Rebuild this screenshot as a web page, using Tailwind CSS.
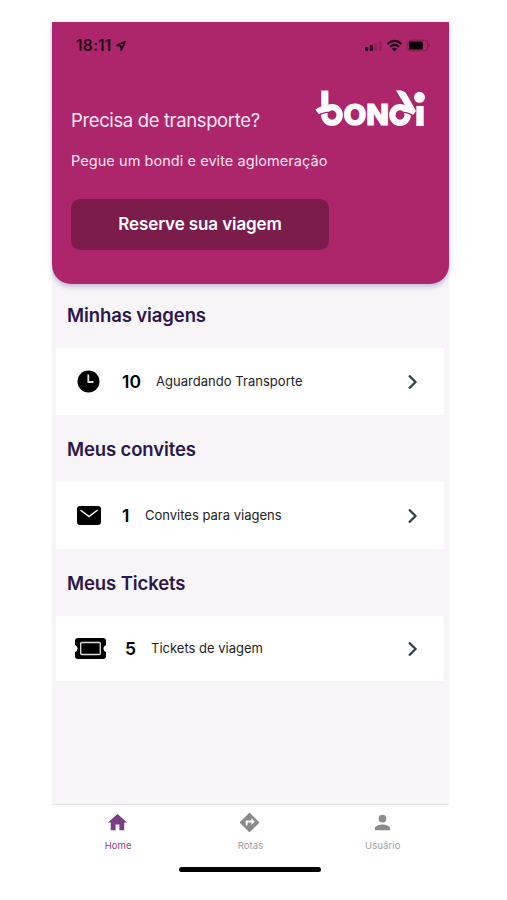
<!DOCTYPE html>
<html lang="pt-BR">
<head>
<meta charset="utf-8">
<title>Bondi</title>
<script src="https://cdn.jsdelivr.net/npm/@tailwindcss/browser@4"></script>
</head>
<body class="bg-white font-['Inter',sans-serif]">
<div class="flex h-[900px] w-[507px] flex-col pt-[22px] pl-[52px]">
  <main class="flex h-[782px] w-[397px] shrink-0 flex-col bg-[#f7f5f7]">
    <header class="h-[262px] shrink-0 rounded-b-[19px] bg-[#ad256b] px-[19px] text-white shadow-[0_3px_5px_rgba(80,60,150,0.3)]">
      <div class="flex h-[47px] items-center justify-between pl-[5px] text-[#1c0715]">
        <div class="flex items-center gap-[3px]">
          <span class="text-[15.5px] leading-none font-semibold tracking-[0.2px]">18:11</span>
          <svg class="h-[12px] w-[12px]" viewBox="0 0 12 12" fill="none" stroke="currentColor" stroke-width="1.7" stroke-linejoin="round"><path d="M10.300 1.500 2 5.300l3.800.5.4 4.400z"/></svg>
        </div>
        <svg class="h-[14px] w-[68px]" viewBox="0 0 68 14" fill="currentColor">
          <rect x="3" y="8" width="3.2" height="4" rx="1"/><rect x="7.700" y="6" width="3.200" height="6" rx="1"/>
          <g opacity=".15"><rect x="12.500" y="4" width="3" height="8" rx="1"/><rect x="17" y="2" width="3" height="10" rx="1"/></g>
          <g fill="none" stroke="currentColor" stroke-width="2"><path d="M25.500 4.900Q32.500-1.100 39.500 4.900"/><path d="M28.100 7.700Q32.500 4 36.900 7.700"/></g>
          <path d="M30 9.800Q32.500 7.900 35 9.800L32.500 12.400Z"/>
          <rect x="45.700" y="1.200" width="20" height="10.600" rx="3" fill="none" stroke="currentColor" opacity=".3"/>
          <rect x="47" y="2.500" width="13.800" height="8" rx="1.500" fill="#080006"/><path d="M66.500 4.500v4q1.500-.6 1.500-2t-1.500-2" opacity=".3"/>
        </svg>
      </div>
      <div class="flex h-[63px] justify-between">
        <h1 class="pt-[40px] text-[18.500px] leading-[22px] font-normal tracking-[-0.37px] whitespace-nowrap text-[#ffe7f5]">Precisa de transporte?</h1>
        <svg class="mt-[13px] mr-[1px] h-[54px] w-[114px] shrink-0" viewBox="0 -6 114 54" role="img" aria-label="bondi" fill="none" stroke="#fff">
          <path stroke-width="7.200" d="M9.800 2.500V20"/>
          <ellipse cx="17" cy="27" rx="7.700" ry="7.900" stroke-width="6.400"/>
          <path stroke-width="6" d="M2.200 24Q7 20 16 20"/>
          <path stroke="#ad256b" stroke-width="1.200" d="M2.500 28.200Q11 22.300 17.500 25.500Q19 26.500 19.500 28.500"/>
          <text x="28.500" y="37.300" fill="#fff" stroke="#fff" stroke-width="1.200" font-family="Inter" font-size="28.500" font-weight="800" textLength="45.500" lengthAdjust="spacingAndGlyphs">ON</text>
          <ellipse cx="85" cy="27" rx="7.700" ry="7.900" stroke-width="6.400"/>
          <path fill="#fff" stroke="none" d="M81 2.500Q88.500 1.500 91.500 6L101 23L98 27Q94 23 87 22L90.500 18Z"/>
          <path stroke="#ad256b" stroke-width="1.200" d="M98.500 28.500Q90.500 22.300 84.500 25.500Q83 26.500 82.500 28.500"/>
          <circle cx="104.500" cy="9.300" r="5.500" fill="#fff" stroke="none"/><path stroke-width="7.400" d="M105 18V38"/>
        </svg>
      </div>
      <p class="mt-[18px] text-[14.500px] leading-[22px] tracking-[0.06px] whitespace-nowrap text-[#ffe2f2]">Pegue um bondi e evite aglomeração</p>
      <button class="mt-[27px] block h-[51px] w-[258px] rounded-[9px] bg-[#7b1c4b] pt-[1px] text-[17px] font-semibold tracking-[-0.1px] text-white">Reserve sua viagem</button>
    </header>

    <section>
      <h2 class="h-[64px] pt-[18px] pl-[15px] text-[18.500px] leading-[26px] font-semibold tracking-[-0.1px] text-[#2b174b]">Minhas viagens</h2>
      <div class="mr-[5px] ml-[4px] flex h-[67px] items-center bg-white pr-[25px] text-black">
        <svg class="ml-[21px] h-[23px] w-[23px]" viewBox="0 0 23 23"><circle cx="11.500" cy="11.500" r="11"/><path d="M11.300 4.500v7.500h5.200" fill="none" stroke="#ddd" stroke-width="1.800"/></svg>
        <b class="ml-[22px] w-[34px] pt-[1px] text-[17.5px] font-semibold">10</b>
        <span class="text-[13px] tracking-[0.03px] whitespace-nowrap text-[#222]">Aguardando Transporte</span>
        <svg class="ml-auto h-[16px] w-[13px]" viewBox="0 0 13 16" fill="none" stroke="#304348" stroke-width="2.300"><path d="m3 1.500 6.500 6.500L3 14.500"/></svg>
      </div>
    </section>
    <section>
      <h2 class="h-[67px] pt-[21px] pl-[15px] text-[18.500px] leading-[26px] font-semibold tracking-[-0.12px] text-[#2b174b]">Meus convites</h2>
      <div class="mr-[5px] ml-[4px] flex h-[67px] items-center bg-white pr-[25px] text-black">
        <svg class="ml-[21px] h-[19px] w-[24px]" viewBox="0 0 24 19"><rect width="24" height="19" rx="3"/><path d="m4 4.500 8 6 8-6" fill="none" stroke="#fff" stroke-width="1.500" stroke-linecap="round"/></svg>
        <b class="ml-[21px] w-[23px] pt-[1px] text-[17.5px] font-semibold">1</b>
        <span class="pt-[1px] text-[13px] whitespace-nowrap text-[#222]">Convites para viagens</span>
        <svg class="ml-auto h-[16px] w-[13px]" viewBox="0 0 13 16" fill="none" stroke="#304348" stroke-width="2.300"><path d="m3 1.500 6.500 6.500L3 14.500"/></svg>
      </div>
    </section>
    <section>
      <h2 class="h-[67px] pt-[21px] pl-[15px] text-[18.500px] leading-[26px] font-semibold tracking-[-0.1px] text-[#2b174b]">Meus Tickets</h2>
      <div class="mr-[5px] ml-[4px] flex h-[65px] items-center bg-white pr-[25px] text-black">
        <svg class="ml-[19px] h-[21px] w-[31px]" viewBox="0 0 30 21" preserveAspectRatio="none"><path d="M3 0H27Q30 0 30 3V7Q27.500 8 27.500 10.500T30 14v4q0 3-3 3H3Q0 21 0 18V14Q2.500 13 2.500 10.500T0 7V3Q0 0 3 0Z"/><rect x="5.500" y="4.500" width="19" height="12" rx="1" fill="none" stroke="#ddd" stroke-width="1.300"/></svg>
        <b class="ml-[19px] w-[26px] pt-[1px] text-[17.5px] font-semibold">5</b>
        <span class="pt-[1px] text-[13px] whitespace-nowrap text-[#222]">Tickets de viagem</span>
        <svg class="ml-auto h-[16px] w-[13px]" viewBox="0 0 13 16" fill="none" stroke="#304348" stroke-width="2.300"><path d="m3 1.500 6.500 6.500L3 14.500"/></svg>
      </div>
    </section>
  </main>

  <nav class="grid h-[63px] w-[397px] shrink-0 grid-cols-3 border-t border-[#e7e5e7] bg-white text-[9.500px] leading-[12px] tracking-[0.1px] text-[#a0a0a0]">
    <div class="flex flex-col items-center pt-[6px] text-[#85428a]">
      <svg class="mr-[2px] h-[23px] w-[23px]" viewBox="0 0 24 24" fill="#7d3c86"><path d="M10 20v-6h4v6h5v-8h3L12 3 2 12h3v8z"/></svg>
      <span class="mt-[6px]">Home</span>
    </div>
    <div class="flex flex-col items-center pt-[6px]">
      <svg class="mr-[1px] h-[23px] w-[23px]" viewBox="0 0 24 24" fill="#8b8b8b"><path d="M21.710 11.290l-9-9a.996.996 0 0 0-1.410 0l-9 9a.996.996 0 0 0 0 1.410l9 9c.39.39 1.020.39 1.410 0l9-9a.996.996 0 0 0 0-1.410zM14 14.500V12h-4v3H8v-4c0-.55.45-1 1-1h5V7.500l3.500 3.500z"/></svg>
      <span class="mt-[6px]">Rotas</span>
    </div>
    <div class="flex flex-col items-center pt-[6px]">
      <svg class="mr-[1px] h-[23px] w-[23px]" viewBox="0 0 24 24" fill="#8b8b8b"><path d="M12 12a4 4 0 1 0 0-8 4 4 0 0 0 0 8zm0 2c-2.670 0-8 1.340-8 4v2h16v-2c0-2.660-5.330-4-8-4z"/></svg>
      <span class="mt-[6px]">Usuário</span>
    </div>
  </nav>
  <div class="ml-[127px] h-[5px] w-[142px] shrink-0 rounded-full bg-black"></div>
</div>
</body>
</html>
